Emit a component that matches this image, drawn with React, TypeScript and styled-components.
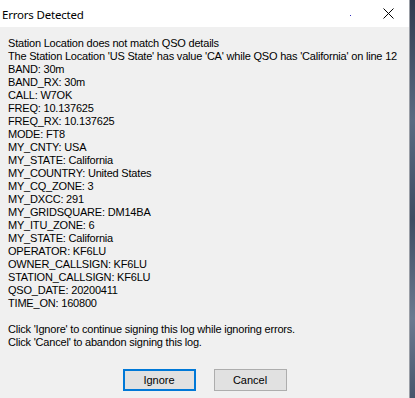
import React from 'react';
import styled, { createGlobalStyle } from 'styled-components';

const GlobalStyle = createGlobalStyle`
  html, body {
    margin: 0;
    padding: 0;
    width: 415px;
    height: 398px;
    overflow: hidden;
    background: #3f4d60;
  }
`;

const fields: [string, string][] = [
  ['BAND', '30m'],
  ['BAND_RX', '30m'],
  ['CALL', 'W7OK'],
  ['FREQ', '10.137625'],
  ['FREQ_RX', '10.137625'],
  ['MODE', 'FT8'],
  ['MY_CNTY', 'USA'],
  ['MY_STATE', 'California'],
  ['MY_COUNTRY', 'United States'],
  ['MY_CQ_ZONE', '3'],
  ['MY_DXCC', '291'],
  ['MY_GRIDSQUARE', 'DM14BA'],
  ['MY_ITU_ZONE', '6'],
  ['MY_STATE', 'California'],
  ['OPERATOR', 'KF6LU'],
  ['OWNER_CALLSIGN', 'KF6LU'],
  ['STATION_CALLSIGN', 'KF6LU'],
  ['QSO_DATE', '20200411'],
  ['TIME_ON', '160800'],
];

const App = () => {
  return (
    <Screen>
      <GlobalStyle />
      <Window>
        <TitleBar>
          <Title>Errors Detected</Title>
          <Stray />
          <CloseButton>
            <svg width="11" height="11" viewBox="0 0 11 11">
              <path d="M0.5 0.5L10.5 10.5M10.5 0.5L0.5 10.5" stroke="#000" strokeWidth="1" />
            </svg>
          </CloseButton>
        </TitleBar>
        <Body>
          <Message>
            <Line>Station Location does not match QSO details</Line>
            <Line>
              The Station Location 'US State' has value 'CA' while QSO has 'California' on line 12
            </Line>
            {fields.map(([k, v], i) => (
              <Line key={i}>
                {k}: {v}
              </Line>
            ))}
            <Line>&nbsp;</Line>
            <Line>Click 'Ignore' to continue signing this log while ignoring errors.</Line>
            <Line>Click 'Cancel' to abandon signing this log.</Line>
          </Message>
          <ButtonRow>
            <Button $default>Ignore</Button>
            <Button>Cancel</Button>
          </ButtonRow>
        </Body>
      </Window>
      <Desktop />
    </Screen>
  );
};

export default App;

const Screen = styled.div`
  display: flex;
  width: 415px;
  height: 398px;
`;

const Window = styled.div`
  width: 409px;
  height: 398px;
  display: flex;
  flex-direction: column;
  background: #f0f0f0;
  border-right: 1px solid #9a9ea6;
`;

const TitleBar = styled.div`
  height: 27px;
  background: #ffffff;
  display: flex;
  align-items: center;
  padding-left: 2px;
  flex-shrink: 0;
`;

const Title = styled.div`
  font-family: 'Noto Sans', 'Open Sans', sans-serif;
  font-size: 11.5px;
  letter-spacing: -0.2px;
  color: #000;
  flex: 1;
  padding-top: 1px;
`;

const Stray = styled.div`
  width: 1px;
  height: 1px;
  background: #3030c0;
  margin-right: 21px;
  margin-top: 3px;
`;

const CloseButton = styled.div`
  width: 33px;
  height: 27px;
  display: flex;
  align-items: center;
  justify-content: center;
  margin-right: 4px;
`;

const Body = styled.div`
  flex: 1;
  padding: 10px 8px 0 8px;
  display: flex;
  flex-direction: column;
`;

const Message = styled.div`
  font-family: 'Liberation Sans', Arial, sans-serif;
  font-size: 11px;
  letter-spacing: -0.2px;
  color: #000;
`;

const Line = styled.div`
  height: 13px;
  line-height: 13px;
  white-space: nowrap;
`;

const ButtonRow = styled.div`
  display: flex;
  justify-content: center;
  gap: 18px;
  margin-top: 20px;
`;

const Button = styled.div<{ $default?: boolean }>`
  width: 73px;
  height: 22px;
  box-sizing: border-box;
  display: flex;
  align-items: center;
  justify-content: center;
  background: #e1e1e1;
  border: ${p => (p.$default ? '2px solid #0078d7' : '1px solid #adadad')};
  font-family: 'Liberation Sans', Arial, sans-serif;
  font-size: 11px;
  color: #000;
`;

const Desktop = styled.div`
  flex: 1;
  background: linear-gradient(180deg, #2f3b4f 0%, #5a6b82 30%, #3e4c62 55%, #6a7a90 80%, #48566c 100%);
`;
